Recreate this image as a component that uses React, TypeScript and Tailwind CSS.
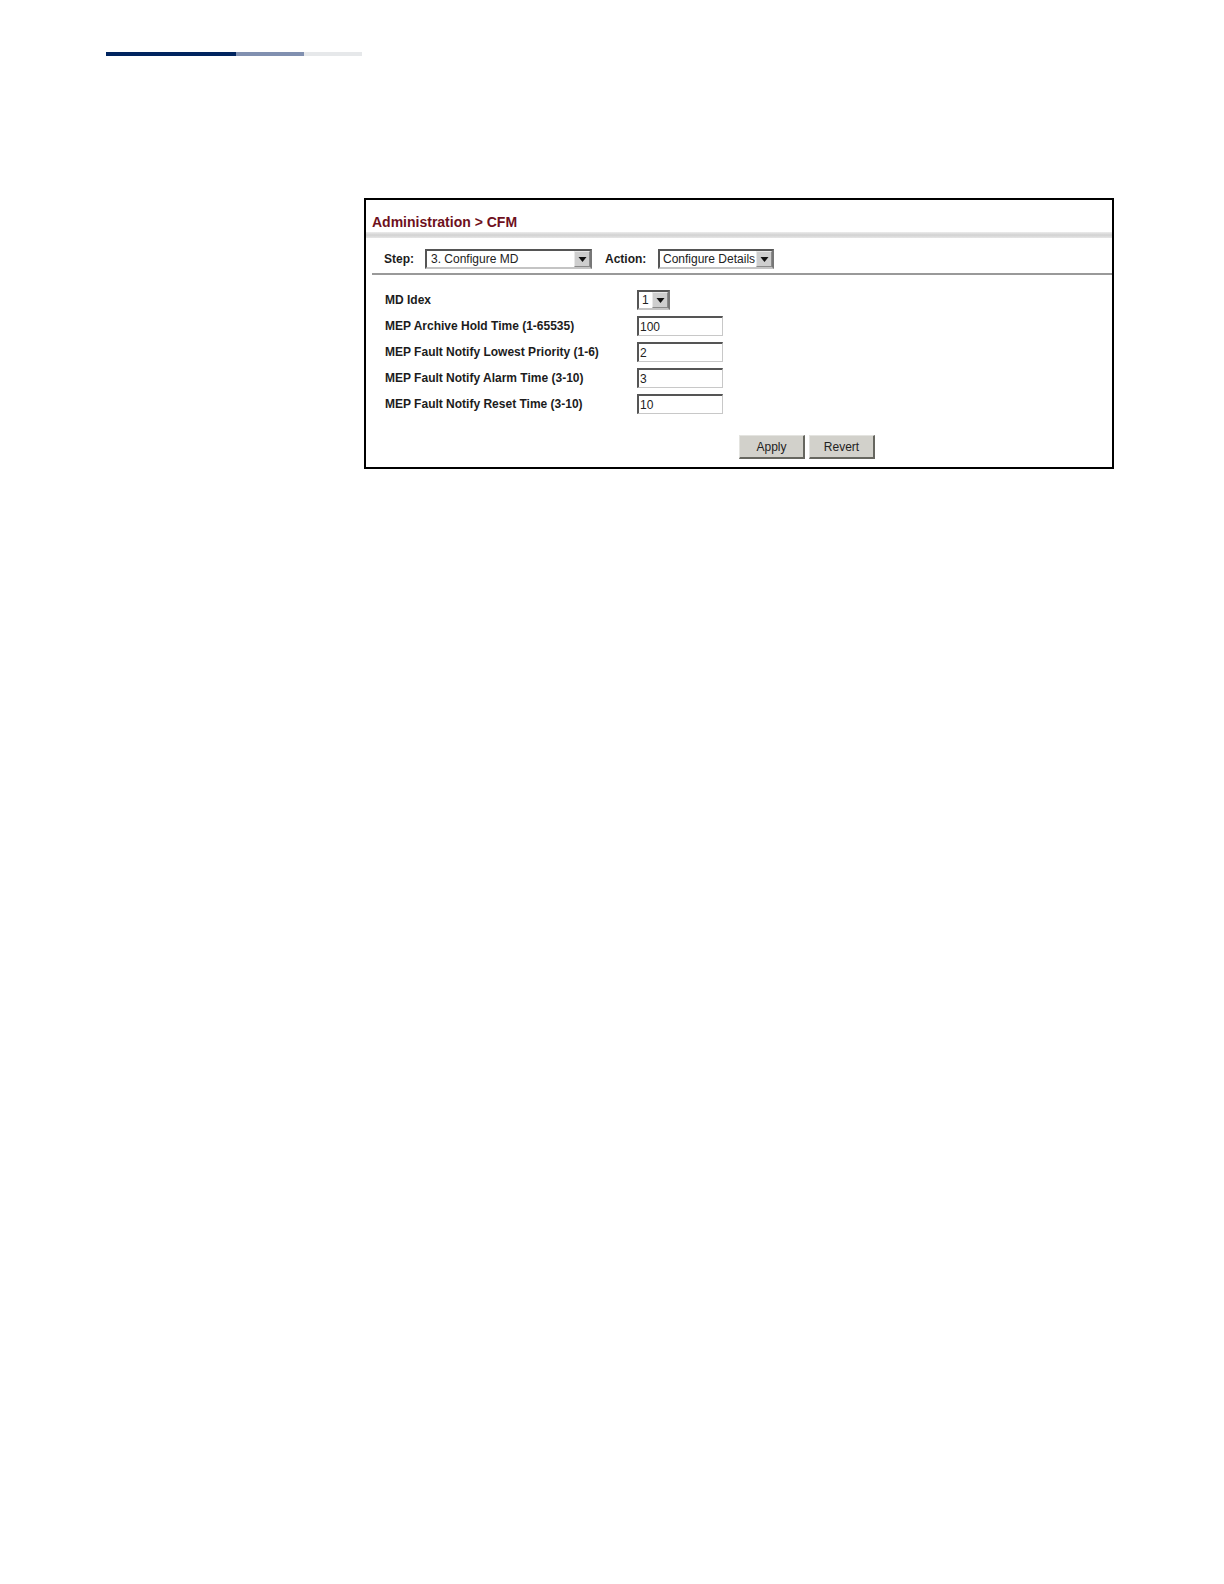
import type { ReactNode } from "react";

type SelectBoxProps = {
  id: string;
  width: string;
  inset: string;
  options: string[];
};

function SelectBox({ id, width, inset, options }: SelectBoxProps) {
  return (
    <div
      className={`relative h-5 border-2 border-t-[#555555] border-l-[#555555] border-r-[#777777] border-b-[#c4c4c4] bg-white ${width}`}
    >
      <select
        id={id}
        className={`block h-4 w-full appearance-none bg-transparent text-xs leading-4 text-[#222222] outline-none ${inset}`}
      >
        {options.map((option) => (
          <option key={option}>{option}</option>
        ))}
      </select>
      <span className="pointer-events-none absolute inset-y-0 right-0 flex w-4 items-center justify-center border border-t-[#e8e8e8] border-l-[#e8e8e8] border-r-[#8a8a8a] border-b-[#8a8a8a] bg-[#cecece]">
        <svg width="9" height="5" viewBox="0 0 9 5" aria-hidden="true">
          <path d="M0.5 0h8L4.5 5z" fill="#111111" />
        </svg>
      </span>
    </div>
  );
}

function Row({ id, label, children }: { id: string; label: string; children: ReactNode }) {
  return (
    <div className="flex h-5 items-center">
      <label htmlFor={id} className="w-[252px] shrink-0 text-xs font-bold">
        {label}
      </label>
      {children}
    </div>
  );
}

const fields = [
  { id: "hold-time", label: "MEP Archive Hold Time (1-65535)", value: "100" },
  { id: "lowest-priority", label: "MEP Fault Notify Lowest Priority (1-6)", value: "2" },
  { id: "alarm-time", label: "MEP Fault Notify Alarm Time (3-10)", value: "3" },
  { id: "reset-time", label: "MEP Fault Notify Reset Time (3-10)", value: "10" },
];

function PushButton({ children }: { children: ReactNode }) {
  return (
    <button
      type="button"
      className="h-6 w-[66px] border-t border-l border-r-2 border-b-2 border-t-[#e4e4e0] border-l-[#e4e4e0] border-r-[#66665f] border-b-[#66665f] bg-[#d2d1cb] text-xs text-[#222222]"
    >
      {children}
    </button>
  );
}

export default function App() {
  return (
    <div className="min-h-screen bg-white font-['Liberation_Sans',Arial,sans-serif] text-[#1c1c1c]">
      <div className="flex pt-[52px] pl-[106px]">
        <div className="h-1 w-[130px] bg-[#00245f]" />
        <div className="h-1 w-[68px] bg-[#8190b0]" />
        <div className="h-1 w-[58px] bg-[#e6e8ea]" />
      </div>

      <main className="mt-[142px] mr-[110px] ml-[364px] border-2 border-black pb-2">
        <h1 className="pt-[14px] pb-0.5 pl-1.5 text-sm leading-4 font-bold text-[#6e1020]">
          Administration &gt; CFM
        </h1>
        <div className="h-1.5 bg-linear-to-b from-[#ececec] via-[#d2d2d2] to-[#e6e6e6]" />

        <form>
          <div className="ml-1.5 flex items-center border-b-2 border-[#999999] pt-[11px] pb-1 pl-3">
            <label htmlFor="step" className="w-[41px] text-xs font-bold">
              Step:
            </label>
            <SelectBox id="step" width="w-[167px]" inset="pl-1" options={["3. Configure MD"]} />
            <label htmlFor="action" className="ml-[13px] w-[53px] text-xs font-bold">
              Action:
            </label>
            <SelectBox
              id="action"
              width="w-[116px]"
              inset="pl-[3px]"
              options={["Configure Details"]}
            />
          </div>

          <div className="flex flex-col gap-1.5 pt-[15px] pl-[19px]">
            <Row id="md-index" label="MD Idex">
              <SelectBox id="md-index" width="w-[33px]" inset="pl-[3px]" options={["1"]} />
            </Row>
            {fields.map((field) => (
              <Row key={field.id} id={field.id} label={field.label}>
                <input
                  id={field.id}
                  type="text"
                  defaultValue={field.value}
                  className="h-5 w-[86px] border-t-2 border-r border-b border-l-2 border-t-[#555555] border-r-[#c8c8c8] border-b-[#c8c8c8] border-l-[#555555] bg-white pl-px text-xs text-[#222222] outline-none"
                />
              </Row>
            ))}
          </div>

          <div className="flex justify-center gap-1 pt-[21px] pl-[136px]">
            <PushButton>Apply</PushButton>
            <PushButton>Revert</PushButton>
          </div>
        </form>
      </main>
    </div>
  );
}
